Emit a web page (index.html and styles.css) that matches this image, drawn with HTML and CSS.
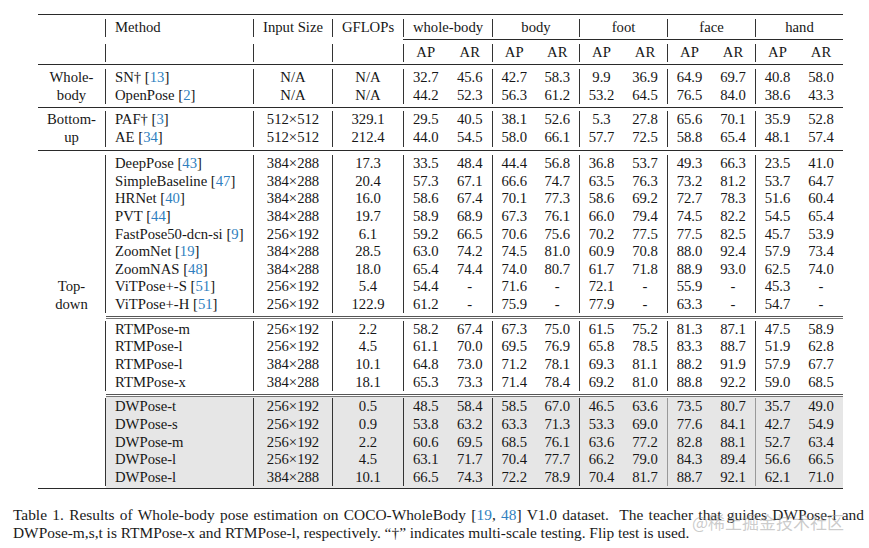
FILE: index.html
```html
<!DOCTYPE html>
<html>
<head>
<meta charset="utf-8">
<link rel="stylesheet" href="styles.css">
</head>
<body>
<div class="tbl">
  <div class="rule top"></div>
  <div class="r hr1">
    <span></span><span class="m b">Method</span><span class="b">Input Size</span><span class="b">GFLOPs</span>
    <span class="b g2">whole-body</span><span class="b g2">body</span><span class="b g2">foot</span><span class="b g2">face</span><span class="b g2">hand</span>
  </div>
  <div class="rule cmid"></div>
  <div class="r hr2">
    <span></span><span class="m b"></span><span class="b"></span><span class="b"></span>
    <span class="b">AP</span><span>AR</span><span class="b">AP</span><span>AR</span><span class="b">AP</span><span>AR</span><span class="b">AP</span><span>AR</span><span class="b">AP</span><span>AR</span>
  </div>
  <div class="rule mid m1"></div>

  <div class="blk b1">
    <div class="r"><span>Whole-</span><span class="m b">SN† [<a>13</a>]</span><span class="b">N/A</span><span class="b">N/A</span><span class="b">32.7</span><span>45.6</span><span class="b">42.7</span><span>58.3</span><span class="b">9.9</span><span>36.9</span><span class="b">64.9</span><span>69.7</span><span class="b">40.8</span><span>58.0</span></div>
    <div class="r"><span>body</span><span class="m b">OpenPose [<a>2</a>]</span><span class="b">N/A</span><span class="b">N/A</span><span class="b">44.2</span><span>52.3</span><span class="b">56.3</span><span>61.2</span><span class="b">53.2</span><span>64.5</span><span class="b">76.5</span><span>84.0</span><span class="b">38.6</span><span>43.3</span></div>
  </div>
  <div class="rule mid m2"></div>

  <div class="blk b2">
    <div class="r"><span>Bottom-</span><span class="m b">PAF† [<a>3</a>]</span><span class="b">512×512</span><span class="b">329.1</span><span class="b">29.5</span><span>40.5</span><span class="b">38.1</span><span>52.6</span><span class="b">5.3</span><span>27.8</span><span class="b">65.6</span><span>70.1</span><span class="b">35.9</span><span>52.8</span></div>
    <div class="r"><span>up</span><span class="m b">AE [<a>34</a>]</span><span class="b">512×512</span><span class="b">212.4</span><span class="b">44.0</span><span>54.5</span><span class="b">58.0</span><span>66.1</span><span class="b">57.7</span><span>72.5</span><span class="b">58.8</span><span>65.4</span><span class="b">48.1</span><span>57.4</span></div>
  </div>
  <div class="rule mid m3"></div>

  <div class="blk b3">
    <div class="r"><span></span><span class="m b">DeepPose [<a>43</a>]</span><span class="b">384×288</span><span class="b">17.3</span><span class="b">33.5</span><span>48.4</span><span class="b">44.4</span><span>56.8</span><span class="b">36.8</span><span>53.7</span><span class="b">49.3</span><span>66.3</span><span class="b">23.5</span><span>41.0</span></div>
    <div class="r"><span></span><span class="m b">SimpleBaseline [<a>47</a>]</span><span class="b">384×288</span><span class="b">20.4</span><span class="b">57.3</span><span>67.1</span><span class="b">66.6</span><span>74.7</span><span class="b">63.5</span><span>76.3</span><span class="b">73.2</span><span>81.2</span><span class="b">53.7</span><span>64.7</span></div>
    <div class="r"><span></span><span class="m b">HRNet [<a>40</a>]</span><span class="b">384×288</span><span class="b">16.0</span><span class="b">58.6</span><span>67.4</span><span class="b">70.1</span><span>77.3</span><span class="b">58.6</span><span>69.2</span><span class="b">72.7</span><span>78.3</span><span class="b">51.6</span><span>60.4</span></div>
    <div class="r"><span></span><span class="m b">PVT [<a>44</a>]</span><span class="b">384×288</span><span class="b">19.7</span><span class="b">58.9</span><span>68.9</span><span class="b">67.3</span><span>76.1</span><span class="b">66.0</span><span>79.4</span><span class="b">74.5</span><span>82.2</span><span class="b">54.5</span><span>65.4</span></div>
    <div class="r"><span></span><span class="m b">FastPose50-dcn-si [<a>9</a>]</span><span class="b">256×192</span><span class="b">6.1</span><span class="b">59.2</span><span>66.5</span><span class="b">70.6</span><span>75.6</span><span class="b">70.2</span><span>77.5</span><span class="b">77.5</span><span>82.5</span><span class="b">45.7</span><span>53.9</span></div>
    <div class="r"><span></span><span class="m b">ZoomNet [<a>19</a>]</span><span class="b">384×288</span><span class="b">28.5</span><span class="b">63.0</span><span>74.2</span><span class="b">74.5</span><span>81.0</span><span class="b">60.9</span><span>70.8</span><span class="b">88.0</span><span>92.4</span><span class="b">57.9</span><span>73.4</span></div>
    <div class="r"><span></span><span class="m b">ZoomNAS [<a>48</a>]</span><span class="b">384×288</span><span class="b">18.0</span><span class="b">65.4</span><span>74.4</span><span class="b">74.0</span><span>80.7</span><span class="b">61.7</span><span>71.8</span><span class="b">88.9</span><span>93.0</span><span class="b">62.5</span><span>74.0</span></div>
    <div class="r"><span>Top-</span><span class="m b">ViTPose+-S [<a>51</a>]</span><span class="b">256×192</span><span class="b">5.4</span><span class="b">54.4</span><span>-</span><span class="b">71.6</span><span>-</span><span class="b">72.1</span><span>-</span><span class="b">55.9</span><span>-</span><span class="b">45.3</span><span>-</span></div>
    <div class="r"><span>down</span><span class="m b">ViTPose+-H [<a>51</a>]</span><span class="b">256×192</span><span class="b">122.9</span><span class="b">61.2</span><span>-</span><span class="b">75.9</span><span>-</span><span class="b">77.9</span><span>-</span><span class="b">63.3</span><span>-</span><span class="b">54.7</span><span>-</span></div>
  </div>
  <div class="rule dbl d1"></div>

  <div class="blk b4">
    <div class="r"><span></span><span class="m b">RTMPose-m</span><span class="b">256×192</span><span class="b">2.2</span><span class="b">58.2</span><span>67.4</span><span class="b">67.3</span><span>75.0</span><span class="b">61.5</span><span>75.2</span><span class="b">81.3</span><span>87.1</span><span class="b">47.5</span><span>58.9</span></div>
    <div class="r"><span></span><span class="m b">RTMPose-l</span><span class="b">256×192</span><span class="b">4.5</span><span class="b">61.1</span><span>70.0</span><span class="b">69.5</span><span>76.9</span><span class="b">65.8</span><span>78.5</span><span class="b">83.3</span><span>88.7</span><span class="b">51.9</span><span>62.8</span></div>
    <div class="r"><span></span><span class="m b">RTMPose-l</span><span class="b">384×288</span><span class="b">10.1</span><span class="b">64.8</span><span>73.0</span><span class="b">71.2</span><span>78.1</span><span class="b">69.3</span><span>81.1</span><span class="b">88.2</span><span>91.9</span><span class="b">57.9</span><span>67.7</span></div>
    <div class="r"><span></span><span class="m b">RTMPose-x</span><span class="b">384×288</span><span class="b">18.1</span><span class="b">65.3</span><span>73.3</span><span class="b">71.4</span><span>78.4</span><span class="b">69.2</span><span>81.0</span><span class="b">88.8</span><span>92.2</span><span class="b">59.0</span><span>68.5</span></div>
  </div>
  <div class="rule dbl d2"></div>

  <div class="blk b5">
    <div class="r"><span></span><span class="m b">DWPose-t</span><span class="b">256×192</span><span class="b">0.5</span><span class="b">48.5</span><span>58.4</span><span class="b">58.5</span><span>67.0</span><span class="b">46.5</span><span>63.6</span><span class="b lt">73.5</span><span>80.7</span><span class="b lt">35.7</span><span>49.0</span></div>
    <div class="r"><span></span><span class="m b">DWPose-s</span><span class="b">256×192</span><span class="b">0.9</span><span class="b">53.8</span><span>63.2</span><span class="b">63.3</span><span>71.3</span><span class="b">53.3</span><span>69.0</span><span class="b lt">77.6</span><span>84.1</span><span class="b lt">42.7</span><span>54.9</span></div>
    <div class="r"><span></span><span class="m b">DWPose-m</span><span class="b">256×192</span><span class="b">2.2</span><span class="b">60.6</span><span>69.5</span><span class="b">68.5</span><span>76.1</span><span class="b">63.6</span><span>77.2</span><span class="b lt">82.8</span><span>88.1</span><span class="b lt">52.7</span><span>63.4</span></div>
    <div class="r"><span></span><span class="m b">DWPose-l</span><span class="b">256×192</span><span class="b">4.5</span><span class="b">63.1</span><span>71.7</span><span class="b">70.4</span><span>77.7</span><span class="b">66.2</span><span>79.0</span><span class="b lt">84.3</span><span>89.4</span><span class="b lt">56.6</span><span>66.5</span></div>
    <div class="r"><span></span><span class="m b">DWPose-l</span><span class="b">384×288</span><span class="b">10.1</span><span class="b">66.5</span><span>74.3</span><span class="b">72.2</span><span>78.9</span><span class="b">70.4</span><span>81.7</span><span class="b lt">88.7</span><span>92.1</span><span class="b lt">62.1</span><span>71.0</span></div>
  </div>
  <div class="rule bot"></div>
</div>

<div class="caption">
  <div class="l1">Table 1. Results of Whole-body pose estimation on COCO-WholeBody [<a>19</a>, <a>48</a>] V1.0 dataset.&nbsp; The teacher that guides DWPose-l and</div>
  <div class="l2">DWPose-m,s,t is RTMPose-x and RTMPose-l, respectively. “†” indicates multi-scale testing. Flip test is used.</div>
</div>
<div class="wm">@稀土掘金技术社区</div>
</body>
</html>
```
FILE: styles.css
```css
html, body {
  margin: 0;
  padding: 0;
  background: #ffffff;
}
body {
  position: relative;
  width: 869px;
  height: 548px;
  overflow: hidden;
  font-family: "Liberation Serif", "Times New Roman", serif;
  font-size: 14.7px;
  color: #161616;
}
a { color: #2f7fc0; text-decoration: none; }

.tbl {
  margin-left: 38px;
  width: 805px;
  padding-top: 13.5px;
}
.rule { background: #2a2a2a; }
.top { height: 1.5px; }
.bot { height: 1.5px; }
.mid { height: 1px; }
.cmid { height: 1px; margin-left: 365px; margin-top: 2.6px; }
.hr1 { margin-top: 4px; }
.hr2 { margin-top: 3.8px; }
.m1 { margin-top: 2.4px; }
.b1 { margin-top: 4px; }
.m2 { margin-top: 2.6px; }
.b2 { margin-top: 3.7px; }
.m3 { margin-top: 3.5px; }
.b3 { margin-top: 4px; }
.dbl {
  background: transparent;
  margin-left: 68px;
  height: 1px;
  border-top: 1px solid #555;
  border-bottom: 1px solid #777;
}
.d1 { margin-top: 2.6px; }
.b4 { margin-top: 1.8px; }
.d2 { margin-top: 2.6px; }
.b5 {
  padding: 1.5px 0;
  background: linear-gradient(to right, transparent 68px, #e6e6e6 68px);
}

.r {
  display: grid;
  grid-template-columns: 67px 148px 79px 71px 44.5px 44.5px 43.5px 43.5px 44px 44px 44px 44px 44px 44px;
  height: 17.6px;
  line-height: 17.6px;
}
.r > span {
  text-align: center;
  white-space: nowrap;
}
.r > .m {
  text-align: left;
  padding-left: 9px;
}
.b { border-left: 1px solid #333; }
.lt { border-left-color: #999; }
.g2 { grid-column: span 2; }

.caption {
  margin-top: 17px;
  margin-left: 13px;
  width: 851px;
  font-size: 15.4px;
  line-height: 18px;
  color: #1a1a1a;
}
.l1 {
  text-align: justify;
  text-align-last: justify;
  white-space: nowrap;
}

.wm {
  position: absolute;
  left: 692px;
  top: 512px;
  font-family: "Noto Sans CJK SC", "Noto Sans", sans-serif;
  font-size: 17px;
  line-height: 20px;
  color: rgba(160, 160, 160, 0.55);
  white-space: nowrap;
}
```
